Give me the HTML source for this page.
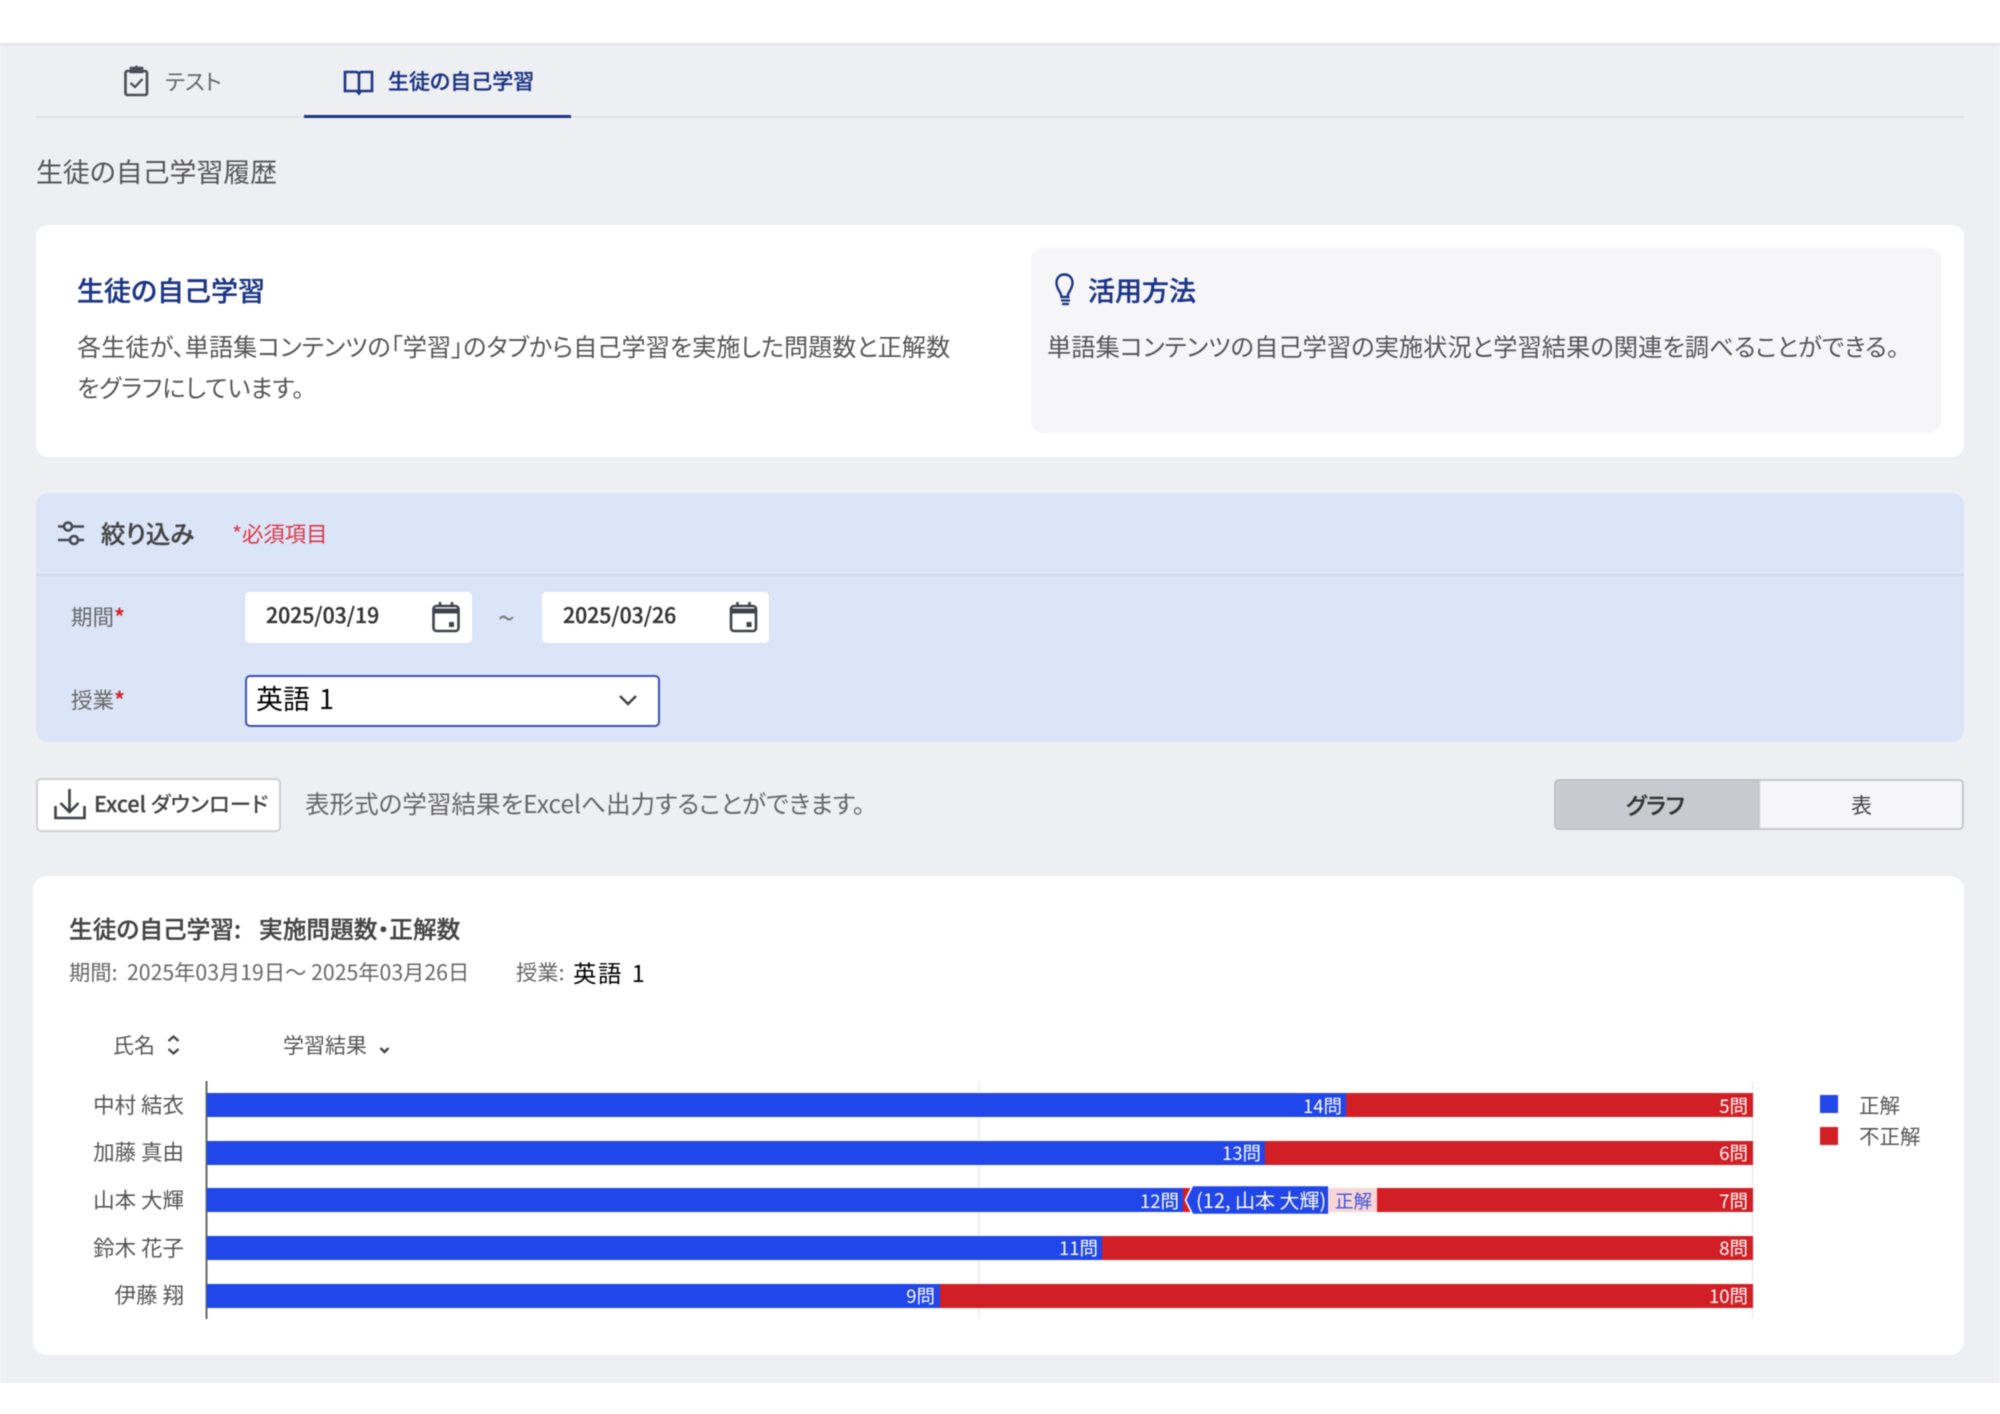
<!DOCTYPE html>
<html lang="ja"><head><meta charset="utf-8"><title>生徒の自己学習履歴</title>
<style>
html,body{margin:0;padding:0;background:#fff}
#p{position:relative;width:2000px;height:1414px;overflow:hidden;background:#fff;font-family:"Noto Sans CJK JP","Liberation Sans",sans-serif;font-feature-settings:"palt";color:#555;filter:blur(.4px)}
#p div{position:absolute}
.t{white-space:nowrap;line-height:40px;height:40px;font-size:24px}
.m{font-weight:500}
.s{-webkit-text-stroke:.3px currentColor}
.n{color:#1c3585;font-weight:500;-webkit-text-stroke:.3px #1c3585}
.b{color:#fff;font-size:18.5px;text-align:right;width:80px;font-feature-settings:"palt"}
.nm{width:120px;left:64px;text-align:right;font-size:21.5px;color:#555}
.r{color:#d8232a;font-weight:700}
svg{position:absolute;left:0;top:0}
</style></head><body>
<div id="p">
<div style="left:0;top:43px;width:2000px;height:1340px;background:#eeeff3;border-top:2px solid #e3e4e7;box-sizing:border-box"></div>
<div style="left:36px;top:116px;width:1928px;height:2px;background:#e0e1e5"></div>
<div style="left:304px;top:115px;width:267px;height:3px;background:#1c3585"></div>
<div style="left:36px;top:225px;width:1928px;height:232px;background:#fff;border-radius:12px"></div>
<div style="left:1031px;top:248px;width:910px;height:185px;background:#f6f6f9;border-radius:12px"></div>
<div style="left:36px;top:493px;width:1928px;height:249px;background:#dbe5f8;border-radius:12px"></div>
<div style="left:36px;top:574px;width:1928px;height:2px;background:#cdd9ee"></div>
<div style="left:245px;top:592px;width:227px;height:51px;background:#fff;border-radius:4px;box-shadow:0 0 1px #ccc"></div>
<div style="left:542px;top:592px;width:227px;height:51px;background:#fff;border-radius:4px;box-shadow:0 0 1px #ccc"></div>
<div style="left:244.500px;top:675px;width:415px;height:52px;background:#fff;border:2.5px solid #3a4eae;border-radius:5px;box-sizing:border-box"></div>
<div style="left:36px;top:778px;width:245px;height:54px;background:#fff;border:2px solid #d0d1d5;border-radius:5px;box-sizing:border-box"></div>
<div style="left:1554px;top:779px;width:410px;height:51px;background:#f6f6f9;border:2px solid #c6c7cc;border-radius:5px;box-sizing:border-box"></div>
<div style="left:1554px;top:779px;width:206px;height:51px;background:#c9cacf;border:2px solid #c0c1c6;border-right:0;border-radius:5px 0 0 5px;box-sizing:border-box"></div>
<div style="left:33px;top:876px;width:1931px;height:479px;background:#fff;border-radius:14px"></div>

<svg width="2000" height="1414" viewBox="0 0 2000 1414" fill="none">
<!-- clipboard -->
<g stroke="#4a4d55" stroke-width="2.6">
<rect x="125.500" y="71" width="21.500" height="24" rx="2"/>
<path d="M131 68h11v4h-11z" fill="#4a4d55"/><circle cx="136.500" cy="67" r="1.500" fill="#4a4d55" stroke="none"/>
<path d="M130.500 83l4.500 4 7.500-8" stroke-width="2.200"/>
</g>
<!-- book -->
<path d="M345 72h11c1.500 0 2.500.7 3 2 .5-1.300 1.500-2 3-2h10v19h-11l-2 2.500-2-2.500h-12zM359 74v17" stroke="#1c3585" stroke-width="2.600"/>
<!-- bulb -->
<path d="M1060.500 297c0-5-5-7.500-5-14 0-5.500 3.500-8.500 8-8.500s8 3 8 8.500c0 6.500-5 9-5 14zM1060.500 297h8" stroke="#1c3585" stroke-width="2.400" transform="translate(1,0)"/>
<path d="M1061 300.500h9M1062 304h7" stroke="#1c3585" stroke-width="2.200"/>
<!-- filter -->
<g stroke="#454850" stroke-width="2.600">
<path d="M58 526.500h6M72 526.500h12M58 540h12M78 540h6"/>
<circle cx="68" cy="526.500" r="4" fill="#dbe5f8"/><circle cx="74" cy="540" r="4" fill="#dbe5f8"/>
</g>
<!-- calendars -->
<g stroke="#3f424a" stroke-width="2.600">
<rect x="433.500" y="606" width="25" height="25" rx="3"/>
<path d="M434 609h24v4h-24z" fill="#3f424a" stroke-width="1"/>
<path d="M440 602v5M452 602v5"/>
<rect x="449" y="622" width="5" height="5" fill="#3f424a" stroke="none"/>
</g>
<g stroke="#3f424a" stroke-width="2.600">
<rect x="731" y="606" width="25" height="25" rx="3"/>
<path d="M732 609h24v4h-24z" fill="#3f424a" stroke-width="1"/>
<path d="M737.500 602v5M749.500 602v5"/>
<rect x="746.500" y="622" width="5" height="5" fill="#3f424a" stroke="none"/>
</g>
<!-- select chevron -->
<path d="M620 696l8 8 8-8" stroke="#3f424a" stroke-width="2.400"/>
<!-- download -->
<path d="M69.500 789v22M60.500 803l9 9 9-9M55.500 806v12h29v-12" stroke="#3f424a" stroke-width="2.600"/>
<!-- sort -->
<path d="M168.500 1041l5-4.500 5 4.500M168.500 1049l5 4.500 5-4.500" stroke="#444" stroke-width="2.200"/>
<path d="M380.500 1048l4 4 4-4" stroke="#444" stroke-width="2.400"/>
<!-- grid -->
<path d="M979 1081v238M1752.500 1081v238" stroke="#f0f0f2" stroke-width="2"/>
<path d="M206.500 1081v238" stroke="#666" stroke-width="2"/>
<!-- bars -->
<rect x="207" y="1093" width="1139" height="24" fill="#2146ea"/><rect x="1346" y="1093" width="407" height="24" fill="#d21f25"/>
<rect x="207" y="1141" width="1058" height="24" fill="#2146ea"/><rect x="1265" y="1141" width="488" height="24" fill="#d21f25"/>
<rect x="207" y="1188" width="976" height="24" fill="#2146ea"/><rect x="1183" y="1188" width="570" height="24" fill="#d21f25"/>
<rect x="207" y="1236" width="895" height="24" fill="#2146ea"/><rect x="1102" y="1236" width="651" height="24" fill="#d21f25"/>
<rect x="207" y="1284" width="733" height="24" fill="#2146ea"/><rect x="940" y="1284" width="813" height="24" fill="#d21f25"/>
<!-- tooltip -->
<rect x="1330" y="1188" width="47" height="24" fill="#f8d5d7"/>
<path d="M1192.500 1185.500H1329v29h-136.500L1185.500 1200z" fill="#2146ea" stroke="#fff" stroke-width="1.600"/>
<!-- legend -->
<rect x="1820" y="1095" width="18" height="18" fill="#2146ea"/>
<rect x="1820" y="1127" width="18" height="18" fill="#d21f25"/>
</svg>

<div class="t" style="left:165px;top:61px;font-size:22px;color:#666">テスト</div>
<div class="t n" style="left:388px;top:61px;font-size:21px">生徒の自己学習</div>
<div class="t" style="left:36px;top:151px;font-size:26.900px;color:#555">生徒の自己学習履歴</div>
<div class="t n" style="left:77px;top:270px;font-size:27px">生徒の自己学習</div>
<div class="t" style="left:77px;top:326px;font-size:24.180px">各生徒が、単語集コンテンツの「学習」のタブから自己学習を実施した問題数と正解数</div>
<div class="t" style="left:77px;top:367px;font-size:24.180px">をグラフにしています。</div>
<div class="t n" style="left:1088px;top:270px;font-size:27px">活用方法</div>
<div class="t" style="left:1047px;top:326px;font-size:24.300px">単語集コンテンツの自己学習の実施状況と学習結果の関連を調べることができる。</div>
<div class="t m s" style="left:101px;top:514px;font-size:24.500px;color:#444">絞り込み</div>
<div class="t" style="left:232px;top:514px;font-size:21.400px;color:#dc3545">*必須項目</div>
<div class="t" style="left:71px;top:597px;font-size:21.500px;color:#666">期間<span class="r">*</span></div>
<div class="t" style="left:71px;top:680px;font-size:21.500px;color:#666">授業<span class="r">*</span></div>
<div class="t m s" style="left:266px;top:595px;font-size:21.200px;color:#333">2025/03/19</div>
<div class="t m s" style="left:563px;top:595px;font-size:21.200px;color:#333">2025/03/26</div>
<div class="t" style="left:498px;top:596px;font-size:30px;color:#777">~</div>
<div class="t" style="left:256px;top:678px;font-size:27px;color:#000;word-spacing:3px">英語 1</div>
<div class="t" style="left:94px;top:784px;font-size:21.500px;color:#444;font-weight:500"><span class="s">Excel</span> ダウンロード</div>
<div class="t" style="left:305px;top:784px;font-size:24.550px;color:#666">表形式の学習結果をExcelへ出力することができます。</div>
<div class="t m s" style="left:1626px;top:785px;font-size:22.500px;color:#333">グラフ</div>
<div class="t" style="left:1851px;top:785px;font-size:21px;color:#444">表</div>
<div class="t m s" style="left:69px;top:908px;font-size:23.700px;color:#444">生徒の自己学習:</div>
<div class="t m s" style="left:259px;top:908px;font-size:23.700px;color:#444">実施問題数・正解数</div>
<div class="t" style="left:69px;top:952px;font-size:21.300px;color:#666">期間:</div>
<div class="t" style="left:127px;top:952px;font-size:21.260px;color:#666">2025年03月19日～ 2025年03月26日</div>
<div class="t" style="left:516px;top:952px;font-size:21.300px;color:#666">授業:</div>
<div class="t" style="left:573px;top:952px;font-size:23.500px;letter-spacing:1.500px;color:#000;word-spacing:2px">英語 1</div>
<div class="t" style="left:113px;top:1025px;font-size:21px;color:#555">氏名</div>
<div class="t" style="left:283px;top:1025px;font-size:21px;color:#555">学習結果</div>
<div class="t nm" style="top:1085px">中村 結衣</div>
<div class="t nm" style="top:1132px">加藤 真由</div>
<div class="t nm" style="top:1180px">山本 大輝</div>
<div class="t nm" style="top:1228px">鈴木 花子</div>
<div class="t nm" style="top:1275px">伊藤 翔</div>
<div class="t b" style="left:1262px;top:1086px">14問</div>
<div class="t b" style="left:1181px;top:1133px">13問</div>
<div class="t b" style="left:1099px;top:1181px">12問</div>
<div class="t b" style="left:1018px;top:1228px">11問</div>
<div class="t b" style="left:855px;top:1276px">9問</div>
<div class="t b" style="left:1668px;top:1086px">5問</div>
<div class="t b" style="left:1668px;top:1133px">6問</div>
<div class="t b" style="left:1668px;top:1181px">7問</div>
<div class="t b" style="left:1668px;top:1228px">8問</div>
<div class="t b" style="left:1668px;top:1276px">10問</div>
<div class="t" style="left:1196px;top:1180px;font-size:20px;color:#fff">(12, 山本 大輝)</div>
<div class="t" style="left:1335px;top:1181px;font-size:18.500px;color:#3f55d8">正解</div>
<div class="t" style="left:1859px;top:1084px;font-size:20.500px;color:#555">正解</div>
<div class="t" style="left:1859px;top:1115px;font-size:20.500px;color:#555">不正解</div>
</div>
</body></html>
